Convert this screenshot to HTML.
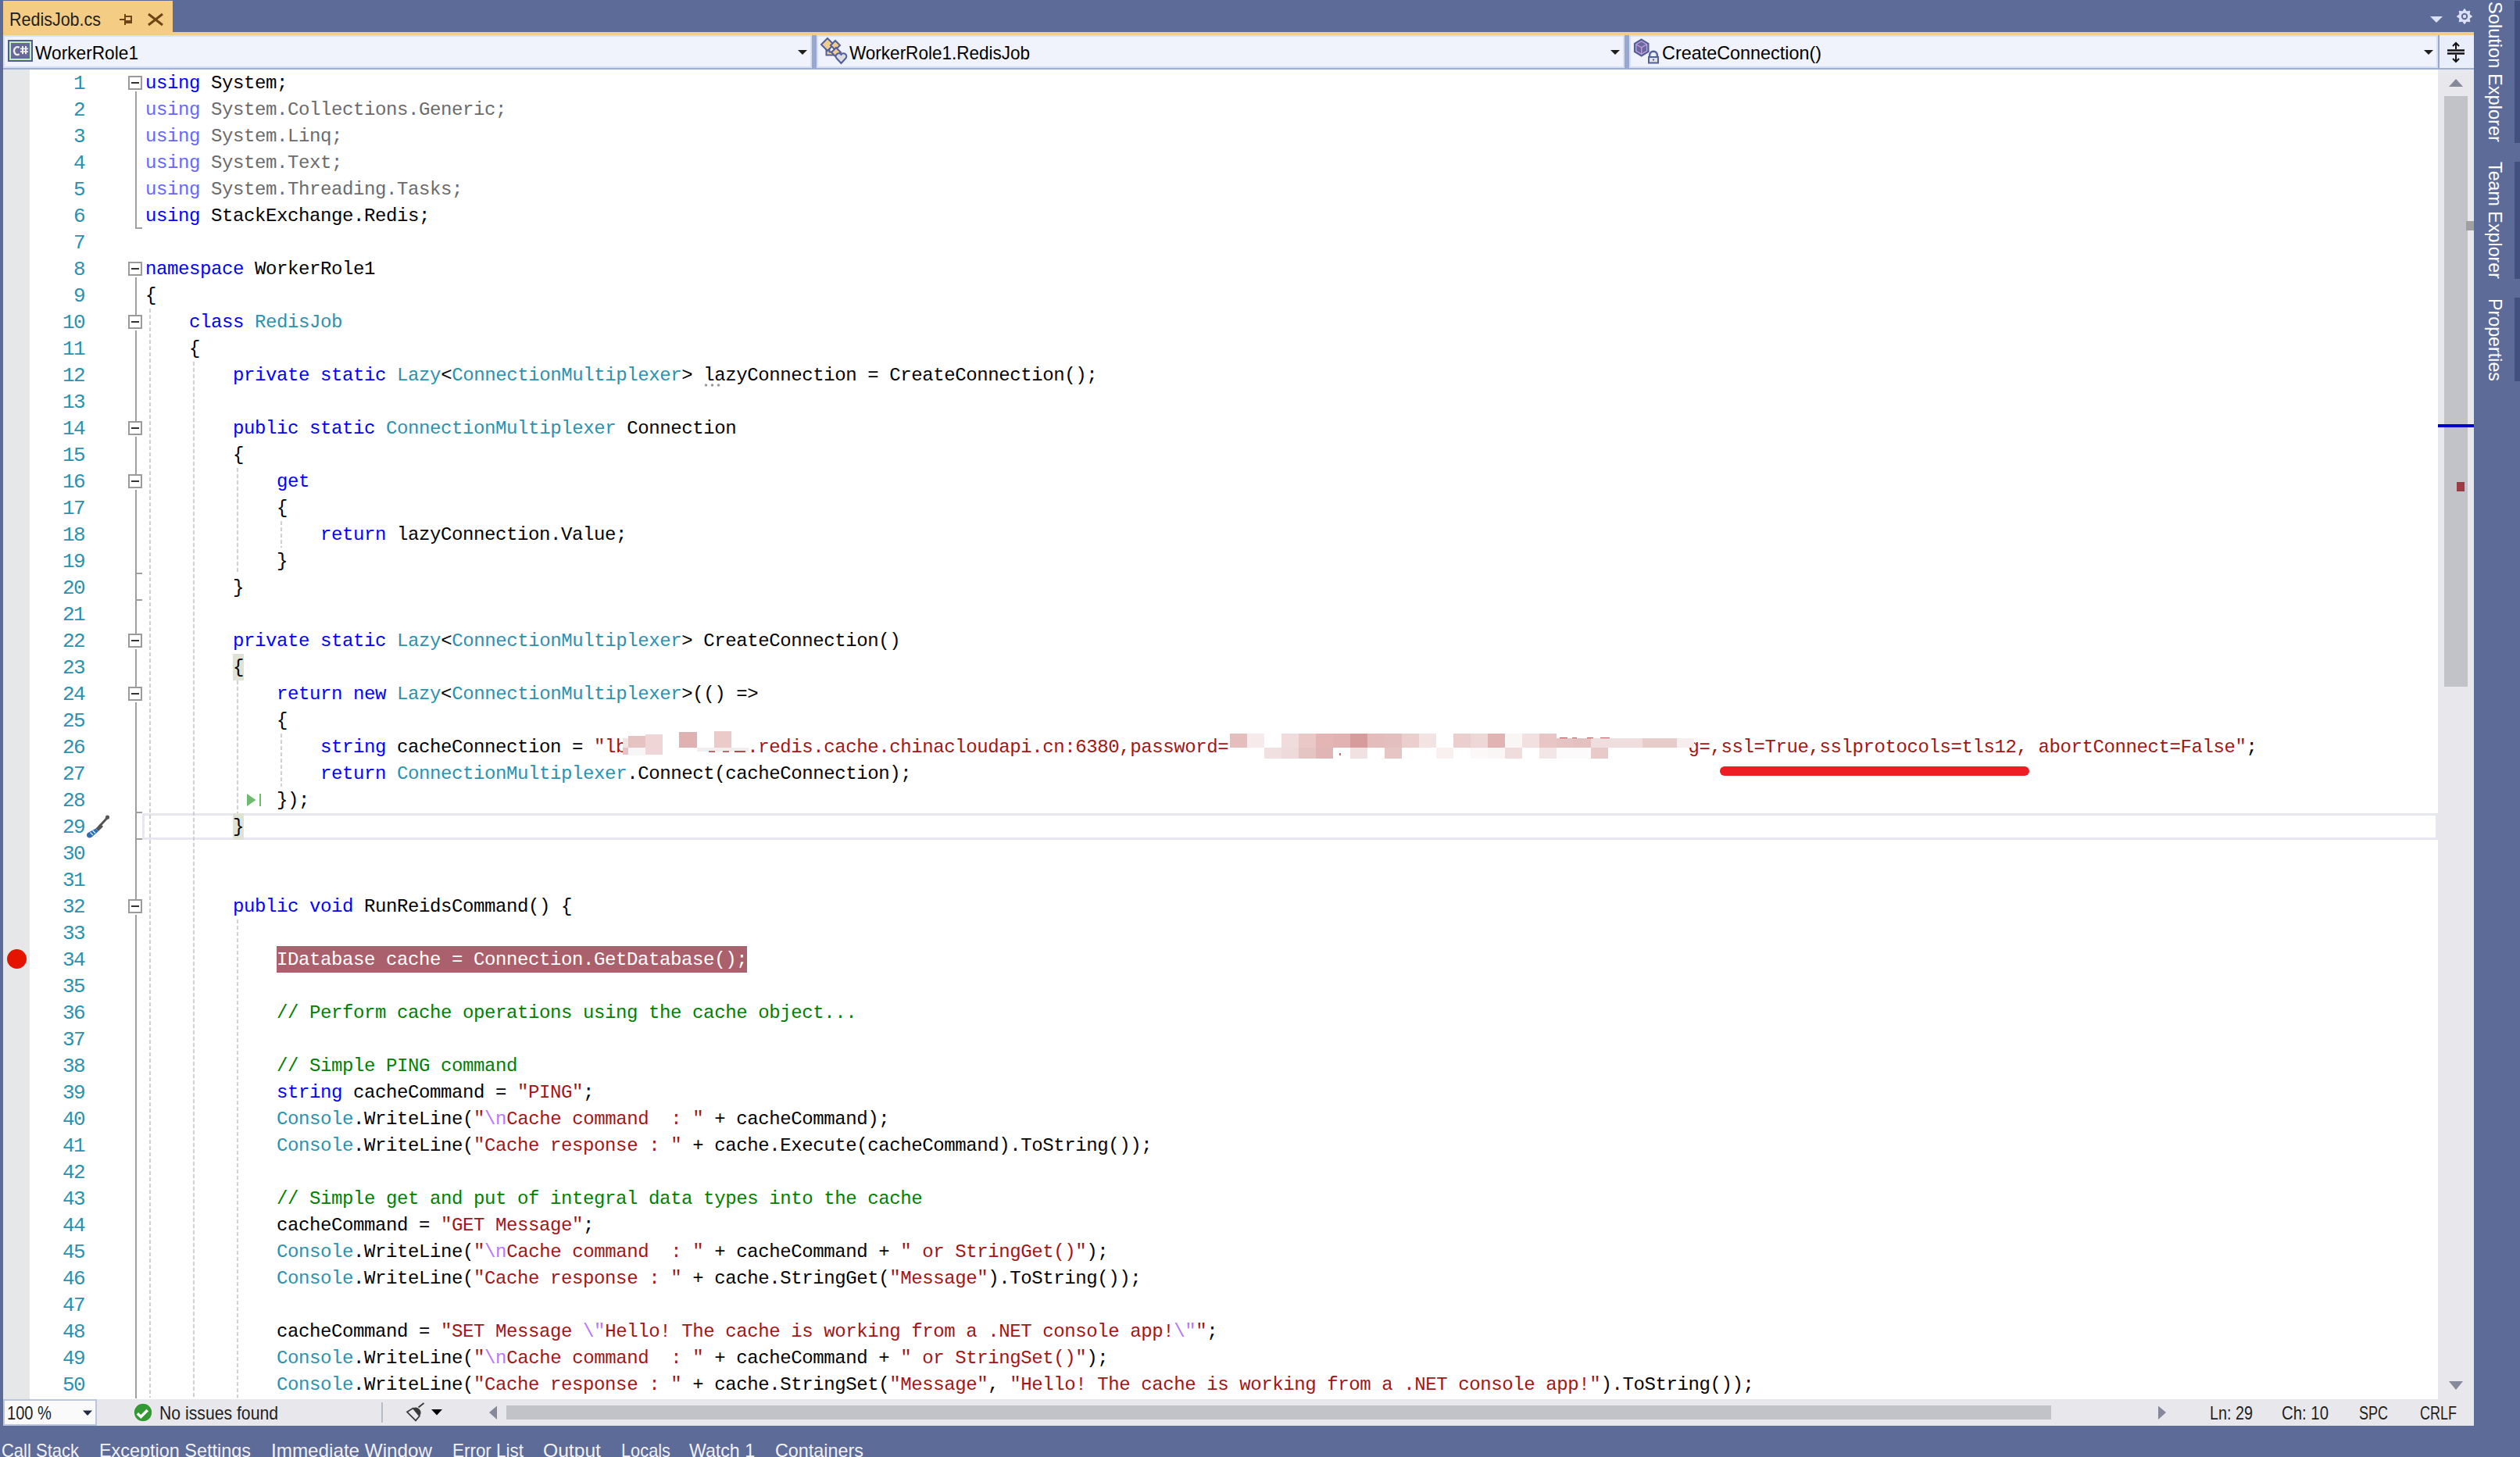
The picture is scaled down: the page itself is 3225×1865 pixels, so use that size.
<!DOCTYPE html>
<html><head><meta charset="utf-8"><style>
*{margin:0;padding:0;box-sizing:border-box}
html,body{width:3225px;height:1865px;overflow:hidden;background:#5D6B99;position:relative;font-family:"Liberation Sans",sans-serif}
.a{position:absolute}
.lb{position:absolute;white-space:nowrap;line-height:1;transform-origin:0 50%}
.tab{position:absolute;left:4px;top:1px;width:217px;height:40px;background:#F5CC84}
.orng{position:absolute;left:4px;top:41px;width:3162px;height:4px;background:#F5CC84}
.nav{position:absolute;left:4px;top:45px;width:3162px;height:44px;background:#E9EEFA;border-bottom:2px solid #9FAED3}
.dd{position:absolute;top:0;height:42px;border:2px solid #D6E1F7;background:#F0F3FB}
.sep{position:absolute;top:0;width:6px;height:42px;background:#97A7CF}
.tri{position:absolute;width:0;height:0;border-left:6px solid transparent;border-right:6px solid transparent;border-top:6px solid #1E1E1E}
.editor{position:absolute;left:4px;top:89px;width:3116px;height:1702px;background:#fff}
.margin{position:absolute;left:4px;top:89px;width:34px;height:1702px;background:#E6E7E8}
.ln{position:absolute;left:40px;width:68px;height:34px;text-align:right;font-family:"Liberation Mono",monospace;font-size:26px;letter-spacing:-1.6px;line-height:34px;color:#2B91AF}
.cl{position:absolute;left:186px;height:34px;white-space:pre;font-family:"Liberation Mono",monospace;font-size:24px;letter-spacing:-0.4px;line-height:34px;color:#000}
.cb{position:absolute;left:164px;width:18px;height:18px;border:2px solid #9A9A9A;background:#fff}
.cb::after{content:"";position:absolute;left:2px;top:6px;width:10px;height:2px;background:#333}
.ol{position:absolute;left:173px;width:2px;background:#9F9F9F}
.tk{position:absolute;left:173px;width:9px;height:2px;background:#9F9F9F}
.gd{position:absolute;width:2px;background:repeating-linear-gradient(to bottom,#CFCFCF 0 5px,transparent 5px 8px)}
.vsb{position:absolute;left:3120px;top:89px;width:46px;height:1702px;background:#E8E8EC}
.status{position:absolute;left:4px;top:1791px;width:3162px;height:34px;background:#E8E8EC}
.dstrip{position:absolute;left:3218px;width:7px;background:#42507F}
</style></head><body>
<div class="tab"></div>
<svg class="a" style="left:150px;top:15px" width="22" height="20" viewBox="150 15 22 20"><path d="M153 25H159" stroke="#6F4518" stroke-width="2"/><path d="M160 18V32" stroke="#6F4518" stroke-width="2"/><path d="M160 21H168V28" fill="none" stroke="#6F4518" stroke-width="2"/><rect x="160" y="26" width="9" height="4" fill="#6F4518"/></svg>
<svg class="a" style="left:186px;top:14px" width="26" height="22" viewBox="186 14 26 22"><path d="M190 18L208 32M208 18L190 32" stroke="#6F4518" stroke-width="3"/></svg>
<div class="orng"></div>
<div class="nav">
 <div class="dd" style="left:0;width:1035px"></div>
 <div class="sep" style="left:1035px"></div>
 <div class="dd" style="left:1041px;width:1034px"></div>
 <div class="sep" style="left:2075px"></div>
 <div class="dd" style="left:2081px;width:1035px"></div>
 <div class="sep" style="left:3116px;width:2px"></div>
</div>
<!-- C# icon -->
<svg class="a" style="left:10px;top:51px" width="32" height="28" viewBox="10 51 32 28"><rect x="10" y="51" width="32" height="28" fill="#4E5C93"/><rect x="12" y="53" width="28" height="24" fill="#BEEFB5"/><rect x="14" y="55" width="24" height="20" fill="#68699B"/><path d="M24.6 61A4.1 5 0 1 0 24.6 69.2" fill="none" stroke="#EEEDE6" stroke-width="2.4"/><g fill="#EEEDE6"><rect x="28" y="59" width="2" height="10.2"/><rect x="32" y="59" width="2" height="10.2"/><rect x="26" y="61.5" width="10" height="1.7"/><rect x="26" y="65.3" width="10" height="1.7"/></g></svg>
<div class="tri" style="left:1021px;top:64px"></div>
<div class="tri" style="left:2061px;top:64px"></div>
<div class="tri" style="left:3102px;top:64px"></div>
<!-- split icon -->
<svg class="a" style="left:3126px;top:50px" width="34" height="34" viewBox="3126 50 34 34"><path d="M3132 64.5H3154M3132 68.5H3154" stroke="#111" stroke-width="2.4"/><path d="M3143 55V63M3143 70V79" stroke="#111" stroke-width="2"/><path d="M3139 59L3143 55L3147 59M3139 75L3143 79L3147 75" fill="none" stroke="#111" stroke-width="2"/></svg>
<!-- top right -->
<svg class="a" style="left:3108px;top:18px" width="20" height="14" viewBox="3108 18 20 14"><path d="M3110 21H3126L3118 29Z" fill="#DDE1F5"/></svg>
<svg class="a" style="left:3142px;top:9px" width="24" height="24" viewBox="-12 -12 24 24"><polygon points="0.00,-9.40 2.45,-5.91 6.65,-6.65 5.91,-2.45 9.40,-0.00 5.91,2.45 6.65,6.65 2.45,5.91 0.00,9.40 -2.45,5.91 -6.65,6.65 -5.91,2.45 -9.40,0.00 -5.91,-2.45 -6.65,-6.65 -2.45,-5.91" fill="#DDE1F5" stroke="#DDE1F5" stroke-width="1.2" stroke-linejoin="round"/><circle r="4.2" fill="#5D6B99"/><circle r="2.2" fill="#DDE1F5"/></svg>
<!-- nav icons -->
<svg class="a" style="left:1049px;top:47px" width="36" height="36" viewBox="1049 47 36 36"><path d="M1059.5 58V68.5H1069" fill="none" stroke="#50609A" stroke-width="6"/><path d="M1059.5 58V68.5H1069" fill="none" stroke="#F7D597" stroke-width="2"/><g fill="#F2CB8E" stroke="#50609A" stroke-width="2"><path d="M1059 49L1067 57L1059 65L1051 57Z"/><path d="M1069 52L1075 58L1069 64L1063 58Z"/><path d="M1070 61L1076 67L1070 73L1064 67Z"/></g><path d="M1076.5 81L1070.5 74.5A3.4 3.4 0 0 1 1076.5 69.8A3.4 3.4 0 0 1 1082.5 74.5Z" fill="#DCDCDC" stroke="#50609A" stroke-width="2"/></svg>
<svg class="a" style="left:2089px;top:48px" width="36" height="35" viewBox="2089 48 36 35"><path d="M2100.7 50.5L2109.5 55.7V66.3L2100.7 71.5L2091.9 66.3V55.7Z" fill="#686A9F" stroke="#52609A" stroke-width="2"/><g fill="none" stroke="#C99FE0" stroke-width="1.3"><path d="M2100.7 52.8L2107.6 56.8V65.2L2100.7 69.2L2093.8 65.2V56.8Z"/><path d="M2093.8 56.8L2100.7 60.8L2107.6 56.8M2100.7 60.8V69.2"/></g><path d="M2111.5 73.5V70.5A4.5 4.5 0 0 1 2120.5 70.5V73.5" fill="none" stroke="#52609A" stroke-width="3.2"/><path d="M2112.8 72.5V70.8A3.2 3.2 0 0 1 2119.2 70.8V72.5" fill="none" stroke="#E4E2DC" stroke-width="1.2"/><rect x="2110" y="73" width="12" height="7.5" fill="#E2E2E2" stroke="#52609A" stroke-width="2"/><rect x="2115" y="75.5" width="2" height="2" fill="#52609A"/></svg>
<div class="editor"></div>
<div class="margin"></div>
<!-- current line box -->
<div class="a" style="left:182px;top:1041px;width:2938px;height:34px;border:3px solid #E6E7EF"></div>
<!-- brace match -->
<div class="a" style="left:298px;top:837px;width:14px;height:34px;background:#DEE3D6"></div>
<div class="a" style="left:298px;top:1041px;width:14px;height:34px;background:#DEE3D6"></div>
<!-- highlight line 34 -->
<div class="a" style="left:354px;top:1211px;width:602px;height:34px;background:#AB616D"></div>
<div class="gd" style="left:191px;top:395px;height:1394px"></div><div class="gd" style="left:247px;top:463px;height:1326px"></div><div class="gd" style="left:303px;top:599px;height:136px"></div><div class="gd" style="left:359px;top:667px;height:34px"></div><div class="gd" style="left:303px;top:871px;height:170px"></div><div class="gd" style="left:359px;top:939px;height:68px"></div><div class="gd" style="left:303px;top:1177px;height:612px"></div>
<div class="cb" style="top:97px"></div><div class="cb" style="top:335px"></div><div class="cb" style="top:403px"></div><div class="cb" style="top:539px"></div><div class="cb" style="top:607px"></div><div class="cb" style="top:811px"></div><div class="cb" style="top:879px"></div><div class="cb" style="top:1151px"></div><div class="ol" style="top:117px;height:176px"></div><div class="tk" style="top:291px"></div><div class="ol" style="top:355px;height:48px"></div><div class="ol" style="top:423px;height:116px"></div><div class="ol" style="top:559px;height:48px"></div><div class="ol" style="top:627px;height:184px"></div><div class="ol" style="top:831px;height:48px"></div><div class="ol" style="top:899px;height:252px"></div><div class="ol" style="top:1171px;height:619px"></div><div class="tk" style="top:733px"></div><div class="tk" style="top:767px"></div><div class="tk" style="top:1039px"></div><div class="tk" style="top:1073px"></div>
<div class="ln" style="top:90px">1</div><div class="ln" style="top:124px">2</div><div class="ln" style="top:158px">3</div><div class="ln" style="top:192px">4</div><div class="ln" style="top:226px">5</div><div class="ln" style="top:260px">6</div><div class="ln" style="top:294px">7</div><div class="ln" style="top:328px">8</div><div class="ln" style="top:362px">9</div><div class="ln" style="top:396px">10</div><div class="ln" style="top:430px">11</div><div class="ln" style="top:464px">12</div><div class="ln" style="top:498px">13</div><div class="ln" style="top:532px">14</div><div class="ln" style="top:566px">15</div><div class="ln" style="top:600px">16</div><div class="ln" style="top:634px">17</div><div class="ln" style="top:668px">18</div><div class="ln" style="top:702px">19</div><div class="ln" style="top:736px">20</div><div class="ln" style="top:770px">21</div><div class="ln" style="top:804px">22</div><div class="ln" style="top:838px">23</div><div class="ln" style="top:872px">24</div><div class="ln" style="top:906px">25</div><div class="ln" style="top:940px">26</div><div class="ln" style="top:974px">27</div><div class="ln" style="top:1008px">28</div><div class="ln" style="top:1042px">29</div><div class="ln" style="top:1076px">30</div><div class="ln" style="top:1110px">31</div><div class="ln" style="top:1144px">32</div><div class="ln" style="top:1178px">33</div><div class="ln" style="top:1212px">34</div><div class="ln" style="top:1246px">35</div><div class="ln" style="top:1280px">36</div><div class="ln" style="top:1314px">37</div><div class="ln" style="top:1348px">38</div><div class="ln" style="top:1382px">39</div><div class="ln" style="top:1416px">40</div><div class="ln" style="top:1450px">41</div><div class="ln" style="top:1484px">42</div><div class="ln" style="top:1518px">43</div><div class="ln" style="top:1552px">44</div><div class="ln" style="top:1586px">45</div><div class="ln" style="top:1620px">46</div><div class="ln" style="top:1654px">47</div><div class="ln" style="top:1688px">48</div><div class="ln" style="top:1722px">49</div><div class="ln" style="top:1756px">50</div>
<div class="cl" style="top:90px"><span style="color:#0000FF">using</span> System;</div><div class="cl" style="top:124px"><span style="color:#6666FF">using</span><span style="color:#6B6B6B"> System.Collections.Generic;</span></div><div class="cl" style="top:158px"><span style="color:#6666FF">using</span><span style="color:#6B6B6B"> System.Linq;</span></div><div class="cl" style="top:192px"><span style="color:#6666FF">using</span><span style="color:#6B6B6B"> System.Text;</span></div><div class="cl" style="top:226px"><span style="color:#6666FF">using</span><span style="color:#6B6B6B"> System.Threading.Tasks;</span></div><div class="cl" style="top:260px"><span style="color:#0000FF">using</span> StackExchange.Redis;</div><div class="cl" style="top:328px"><span style="color:#0000FF">namespace</span> WorkerRole1</div><div class="cl" style="top:362px">{</div><div class="cl" style="top:396px">    <span style="color:#0000FF">class</span> <span style="color:#2B91AF">RedisJob</span></div><div class="cl" style="top:430px">    {</div><div class="cl" style="top:464px">        <span style="color:#0000FF">private</span> <span style="color:#0000FF">static</span> <span style="color:#2B91AF">Lazy</span>&lt;<span style="color:#2B91AF">ConnectionMultiplexer</span>&gt; lazyConnection = CreateConnection();</div><div class="cl" style="top:532px">        <span style="color:#0000FF">public</span> <span style="color:#0000FF">static</span> <span style="color:#2B91AF">ConnectionMultiplexer</span> Connection</div><div class="cl" style="top:566px">        {</div><div class="cl" style="top:600px">            <span style="color:#0000FF">get</span></div><div class="cl" style="top:634px">            {</div><div class="cl" style="top:668px">                <span style="color:#0000FF">return</span> lazyConnection.Value;</div><div class="cl" style="top:702px">            }</div><div class="cl" style="top:736px">        }</div><div class="cl" style="top:804px">        <span style="color:#0000FF">private</span> <span style="color:#0000FF">static</span> <span style="color:#2B91AF">Lazy</span>&lt;<span style="color:#2B91AF">ConnectionMultiplexer</span>&gt; CreateConnection()</div><div class="cl" style="top:838px">        {</div><div class="cl" style="top:872px">            <span style="color:#0000FF">return</span> <span style="color:#0000FF">new</span> <span style="color:#2B91AF">Lazy</span>&lt;<span style="color:#2B91AF">ConnectionMultiplexer</span>&gt;(() =&gt;</div><div class="cl" style="top:906px">            {</div><div class="cl" style="top:940px">                <span style="color:#0000FF">string</span> cacheConnection = <span style="color:#A31515">&quot;lb</span>           <span style="color:#A31515">.redis.cache.chinacloudapi.cn:6380,password=</span>                                          <span style="color:#A31515">g=,ssl=True,sslprotocols=tls12, abortConnect=False&quot;</span>;</div><div class="cl" style="top:974px">                <span style="color:#0000FF">return</span> <span style="color:#2B91AF">ConnectionMultiplexer</span>.Connect(cacheConnection);</div><div class="cl" style="top:1008px">            });</div><div class="cl" style="top:1042px">        }</div><div class="cl" style="top:1144px">        <span style="color:#0000FF">public</span> <span style="color:#0000FF">void</span> RunReidsCommand() {</div><div class="cl" style="top:1212px">            <span style="color:#FFFFFF">IDatabase cache = Connection.GetDatabase();</span></div><div class="cl" style="top:1280px">            <span style="color:#008000">// Perform cache operations using the cache object...</span></div><div class="cl" style="top:1348px">            <span style="color:#008000">// Simple PING command</span></div><div class="cl" style="top:1382px">            <span style="color:#0000FF">string</span> cacheCommand = <span style="color:#A31515">&quot;PING&quot;</span>;</div><div class="cl" style="top:1416px">            <span style="color:#2B91AF">Console</span>.WriteLine(<span style="color:#A31515">&quot;</span><span style="color:#B776FB">\n</span><span style="color:#A31515">Cache command  : &quot;</span> + cacheCommand);</div><div class="cl" style="top:1450px">            <span style="color:#2B91AF">Console</span>.WriteLine(<span style="color:#A31515">&quot;Cache response : &quot;</span> + cache.Execute(cacheCommand).ToString());</div><div class="cl" style="top:1518px">            <span style="color:#008000">// Simple get and put of integral data types into the cache</span></div><div class="cl" style="top:1552px">            cacheCommand = <span style="color:#A31515">&quot;GET Message&quot;</span>;</div><div class="cl" style="top:1586px">            <span style="color:#2B91AF">Console</span>.WriteLine(<span style="color:#A31515">&quot;</span><span style="color:#B776FB">\n</span><span style="color:#A31515">Cache command  : &quot;</span> + cacheCommand + <span style="color:#A31515">&quot; or StringGet()&quot;</span>);</div><div class="cl" style="top:1620px">            <span style="color:#2B91AF">Console</span>.WriteLine(<span style="color:#A31515">&quot;Cache response : &quot;</span> + cache.StringGet(<span style="color:#A31515">&quot;Message&quot;</span>).ToString());</div><div class="cl" style="top:1688px">            cacheCommand = <span style="color:#A31515">&quot;SET Message </span><span style="color:#B776FB">\&quot;</span><span style="color:#A31515">Hello! The cache is working from a .NET console app!</span><span style="color:#B776FB">\&quot;</span><span style="color:#A31515">&quot;</span>;</div><div class="cl" style="top:1722px">            <span style="color:#2B91AF">Console</span>.WriteLine(<span style="color:#A31515">&quot;</span><span style="color:#B776FB">\n</span><span style="color:#A31515">Cache command  : &quot;</span> + cacheCommand + <span style="color:#A31515">&quot; or StringSet()&quot;</span>);</div><div class="cl" style="top:1756px">            <span style="color:#2B91AF">Console</span>.WriteLine(<span style="color:#A31515">&quot;Cache response : &quot;</span> + cache.StringSet(<span style="color:#A31515">&quot;Message&quot;</span>, <span style="color:#A31515">&quot;Hello! The cache is working from a .NET console app!&quot;</span>).ToString());</div>
<div class="a" style="left:797px;top:945px;width:7px;height:12px;background:#F3E3E3"></div><div class="a" style="left:797px;top:957px;width:7px;height:9px;background:#E5C3C3"></div><div class="a" style="left:804px;top:942px;width:22px;height:15px;background:#E6C3C3"></div><div class="a" style="left:804px;top:957px;width:22px;height:10px;background:#F7F5F5"></div><div class="a" style="left:826px;top:940px;width:22px;height:26px;background:#EFD5D5"></div><div class="a" style="left:869px;top:937px;width:23px;height:20px;background:#DFB1B1"></div><div class="a" style="left:914px;top:936px;width:22px;height:21px;background:#EBCACA"></div><div class="a" style="left:892px;top:957px;width:66px;height:5px;background:#F3EEEE"></div><div class="a" style="left:1692px;top:963px;width:2px;height:5px;background:#B54A4A"></div><div class="a" style="left:1714px;top:964px;width:2px;height:3px;background:#C46A6A"></div><div class="a" style="left:1838px;top:962px;width:5px;height:3px;background:#B54A4A"></div><div class="a" style="left:1996px;top:944px;width:10px;height:2px;background:#B85555"></div><div class="a" style="left:2012px;top:944px;width:6px;height:2px;background:#C06060"></div><div class="a" style="left:2031px;top:944px;width:8px;height:2px;background:#B85555"></div><div class="a" style="left:2048px;top:944px;width:12px;height:2px;background:#C06060"></div><div class="a" style="left:2158px;top:948px;width:3px;height:8px;background:#C47070"></div><div class="a" style="left:907px;top:961px;width:8px;height:2px;background:#C46A6A"></div><div class="a" style="left:925px;top:961px;width:8px;height:2px;background:#C46A6A"></div><div class="a" style="left:940px;top:961px;width:14px;height:2px;background:#B54A4A"></div><div class="a" style="left:1574px;top:939px;width:22px;height:18px;background:#E4BDBD"></div><div class="a" style="left:1596px;top:939px;width:22px;height:18px;background:#F6EAEA"></div><div class="a" style="left:1640px;top:939px;width:22px;height:18px;background:#F0DCDC"></div><div class="a" style="left:1662px;top:939px;width:22px;height:18px;background:#EAC8C8"></div><div class="a" style="left:1684px;top:939px;width:22px;height:18px;background:#E3B5B5"></div><div class="a" style="left:1706px;top:939px;width:22px;height:18px;background:#E2B1B1"></div><div class="a" style="left:1728px;top:939px;width:22px;height:18px;background:#D69C9C"></div><div class="a" style="left:1750px;top:939px;width:22px;height:18px;background:#E5BCBC"></div><div class="a" style="left:1772px;top:939px;width:22px;height:18px;background:#E4BFBF"></div><div class="a" style="left:1794px;top:939px;width:22px;height:18px;background:#EBCFCF"></div><div class="a" style="left:1816px;top:939px;width:22px;height:18px;background:#F3E3E3"></div><div class="a" style="left:1860px;top:939px;width:22px;height:18px;background:#EBCFCF"></div><div class="a" style="left:1882px;top:939px;width:22px;height:18px;background:#EED7D7"></div><div class="a" style="left:1904px;top:939px;width:22px;height:18px;background:#E2B3B3"></div><div class="a" style="left:1926px;top:939px;width:22px;height:18px;background:#FAF6F6"></div><div class="a" style="left:1948px;top:939px;width:22px;height:18px;background:#F2E0E0"></div><div class="a" style="left:1970px;top:939px;width:22px;height:18px;background:#E8C6C6"></div><div class="a" style="left:1992px;top:945px;width:22px;height:12px;background:#E6C3C3"></div><div class="a" style="left:2014px;top:945px;width:22px;height:12px;background:#E4C1C1"></div><div class="a" style="left:2036px;top:945px;width:22px;height:12px;background:#F0DEDE"></div><div class="a" style="left:2058px;top:945px;width:22px;height:12px;background:#F0DEDE"></div><div class="a" style="left:2080px;top:945px;width:22px;height:12px;background:#F0DDDD"></div><div class="a" style="left:2102px;top:945px;width:22px;height:12px;background:#E8CCCC"></div><div class="a" style="left:2124px;top:945px;width:22px;height:12px;background:#E8CBCB"></div><div class="a" style="left:2146px;top:945px;width:22px;height:12px;background:#F6EEEE"></div><div class="a" style="left:1618px;top:957px;width:22px;height:14px;background:#F0E0E0"></div><div class="a" style="left:1640px;top:957px;width:22px;height:14px;background:#EEDADA"></div><div class="a" style="left:1662px;top:957px;width:22px;height:14px;background:#E5C4C4"></div><div class="a" style="left:1684px;top:957px;width:22px;height:14px;background:#E0B5B5"></div><div class="a" style="left:1728px;top:957px;width:22px;height:14px;background:#F1E1E1"></div><div class="a" style="left:1772px;top:957px;width:22px;height:14px;background:#E6C5C5"></div><div class="a" style="left:1838px;top:957px;width:22px;height:14px;background:#F9F0F0"></div><div class="a" style="left:1882px;top:957px;width:22px;height:14px;background:#FCF8F8"></div><div class="a" style="left:1904px;top:957px;width:22px;height:14px;background:#FBF6F6"></div><div class="a" style="left:1926px;top:957px;width:22px;height:14px;background:#EFDCDC"></div><div class="a" style="left:1970px;top:957px;width:22px;height:14px;background:#F3E6E6"></div><div class="a" style="left:1992px;top:957px;width:22px;height:14px;background:#FCFAFA"></div><div class="a" style="left:2014px;top:957px;width:22px;height:14px;background:#FCFAFA"></div><div class="a" style="left:2036px;top:957px;width:22px;height:14px;background:#E9CACA"></div>
<!-- red underline -->
<div class="a" style="left:2201px;top:981px;width:396px;height:12px;background:#EE1C25;border-radius:6px"></div>
<!-- dotted suggestion under lazyConnection -->
<svg class="a" style="left:900px;top:489px" width="24" height="8" viewBox="900 489 24 8"><g fill="#9A9A9A"><circle cx="903.5" cy="493" r="1.8"/><circle cx="911.5" cy="493" r="1.8"/><circle cx="919.5" cy="493" r="1.8"/></g></svg>
<!-- breakpoint -->
<div class="a" style="left:9px;top:1215px;width:25px;height:25px;border-radius:50%;background:#E51400"></div>
<!-- run to cursor glyph line 28 -->
<svg class="a" style="left:314px;top:1014px" width="24" height="20" viewBox="314 1014 24 20"><path d="M316 1016V1032L327.5 1024Z" fill="#6DBB6D"/><rect x="332" y="1016" width="2" height="16" fill="#6DBB6D"/></svg>
<!-- screwdriver icon line 29 -->
<svg class="a" style="left:106px;top:1038px" width="38" height="38" viewBox="106 1038 38 38"><path d="M137.5 1046.5L127 1058" stroke="#555" stroke-width="3" stroke-linecap="round"/><circle cx="137.5" cy="1046" r="2.6" fill="#555"/><path d="M128.5 1054.5L132 1058L126 1064L122.5 1060.5Z" fill="#555"/><path d="M122.5 1060.5L126 1064L117.5 1071.5Q113.5 1073.5 111.5 1071Q110 1068 112.5 1066Z" fill="#2E6EB6"/><path d="M115.5 1065.5L119 1069M118.5 1063L122 1066.5" stroke="#E8F0FA" stroke-width="1.1"/></svg>
<div class="vsb"></div>
<svg class="a" style="left:3130px;top:98px" width="26" height="16" viewBox="3130 98 26 16"><path d="M3134 111H3152L3143 101Z" fill="#868999"/></svg>
<div class="a" style="left:3128px;top:123px;width:30px;height:756px;background:#C2C3C9"></div>
<div class="a" style="left:3156px;top:283px;width:10px;height:12px;background:#A0A0A0"></div>
<div class="a" style="left:3120px;top:543px;width:46px;height:4px;background:#0000CD"></div>
<div class="a" style="left:3144px;top:617px;width:10px;height:12px;background:#9A3D45"></div>
<svg class="a" style="left:3130px;top:1765px" width="26" height="16" viewBox="3130 1765 26 16"><path d="M3134 1768H3152L3143 1779Z" fill="#868999"/></svg>
<div class="status"></div>
<div class="a" style="left:4px;top:1791px;width:120px;height:34px;background:#FAFAFA;border:2px solid #BCC7DF"></div>
<svg class="a" style="left:104px;top:1803px" width="16" height="12" viewBox="104 1803 16 12"><path d="M106 1805.5H118L112 1812Z" fill="#1E2A44"/></svg>
<svg class="a" style="left:170px;top:1795px" width="26" height="26" viewBox="170 1795 26 26"><circle cx="183" cy="1808" r="12" fill="#F6F4F8"/><circle cx="183" cy="1808" r="11.2" fill="#339933"/><path d="M175.8 1809.3L180.3 1813.6L188.8 1805" fill="none" stroke="#fff" stroke-width="3.6"/></svg>
<div class="a" style="left:488px;top:1795px;width:2px;height:26px;background:#B4BCC8"></div>
<svg class="a" style="left:516px;top:1793px" width="54" height="30" viewBox="516 1793 54 30"><path d="M521 1807.3L528.6 1802.5L536.9 1812.5L532 1818.4Z" fill="none" stroke="#3A3A3A" stroke-width="1.7" stroke-linejoin="miter"/><path d="M528.6 1802.5A6.6 6.6 0 0 1 536.9 1812.5Z" fill="#3A3A3A"/><path d="M535.5 1801.5L542.5 1796" stroke="#3A3A3A" stroke-width="2"/><path d="M552 1804H566L559 1811.5Z" fill="#000"/></svg>
<svg class="a" style="left:624px;top:1797px" width="14" height="22" viewBox="624 1797 14 22"><path d="M636 1799.5V1817L626 1808Z" fill="#868999"/></svg>
<div class="a" style="left:648px;top:1799px;width:1977px;height:18px;background:#C2C3C9"></div>
<svg class="a" style="left:2760px;top:1797px" width="14" height="22" viewBox="2760 1797 14 22"><path d="M2762 1799.5V1817L2772 1808Z" fill="#868999"/></svg>
<div class="dstrip" style="top:1px;height:182px"></div>
<div class="dstrip" style="top:207px;height:150px"></div>
<div class="dstrip" style="top:381px;height:107px"></div>
<div class="lb" style="left:12px;top:13px;font-size:24px;color:#1E1E1E;transform:scaleX(0.8952);">RedisJob.cs</div><div class="lb" style="left:45px;top:56px;font-size:24px;color:#000;transform:scaleX(0.9456);">WorkerRole1</div><div class="lb" style="left:1087px;top:56px;font-size:24px;color:#000;transform:scaleX(0.9379);">WorkerRole1.RedisJob</div><div class="lb" style="left:2127px;top:56px;font-size:24px;color:#000;transform:scaleX(0.9742);">CreateConnection()</div><div class="lb" style="left:9px;top:1797px;font-size:24px;color:#1E1E1E;transform:scaleX(0.8370);">100 %</div><div class="lb" style="left:204px;top:1797px;font-size:24px;color:#1E1E1E;transform:scaleX(0.8832);">No issues found</div><div class="lb" style="left:2828px;top:1797px;font-size:24px;color:#1E1E1E;transform:scaleX(0.8246);">Ln: 29</div><div class="lb" style="left:2920px;top:1797px;font-size:24px;color:#1E1E1E;transform:scaleX(0.8487);">Ch: 10</div><div class="lb" style="left:3019px;top:1797px;font-size:24px;color:#1E1E1E;transform:scaleX(0.7505);">SPC</div><div class="lb" style="left:3097px;top:1797px;font-size:24px;color:#1E1E1E;transform:scaleX(0.7496);">CRLF</div><div class="lb" style="left:2px;top:1845px;font-size:24px;color:#F1F1F6;transform:scaleX(0.9158);">Call Stack</div><div class="lb" style="left:127px;top:1845px;font-size:24px;color:#F1F1F6;transform:scaleX(0.9759);">Exception Settings</div><div class="lb" style="left:347px;top:1845px;font-size:24px;color:#F1F1F6;transform:scaleX(1.0093);">Immediate Window</div><div class="lb" style="left:579px;top:1845px;font-size:24px;color:#F1F1F6;transform:scaleX(0.9343);">Error List</div><div class="lb" style="left:695px;top:1845px;font-size:24px;color:#F1F1F6;transform:scaleX(1.0264);">Output</div><div class="lb" style="left:795px;top:1845px;font-size:24px;color:#F1F1F6;transform:scaleX(0.9078);">Locals</div><div class="lb" style="left:882px;top:1845px;font-size:24px;color:#F1F1F6;transform:scaleX(0.9644);">Watch 1</div><div class="lb" style="left:992px;top:1845px;font-size:24px;color:#F1F1F6;transform:scaleX(0.9733);">Containers</div><div class="lb" style="left:3205px;top:2px;font-size:24px;color:#FFFFFF;transform-origin:0 0;transform:rotate(90deg) scaleX(0.9847)">Solution Explorer</div><div class="lb" style="left:3205px;top:207px;font-size:24px;color:#FFFFFF;transform-origin:0 0;transform:rotate(90deg) scaleX(0.9696)">Team Explorer</div><div class="lb" style="left:3205px;top:382px;font-size:24px;color:#FFFFFF;transform-origin:0 0;transform:rotate(90deg) scaleX(0.9689)">Properties</div>
</body></html>
